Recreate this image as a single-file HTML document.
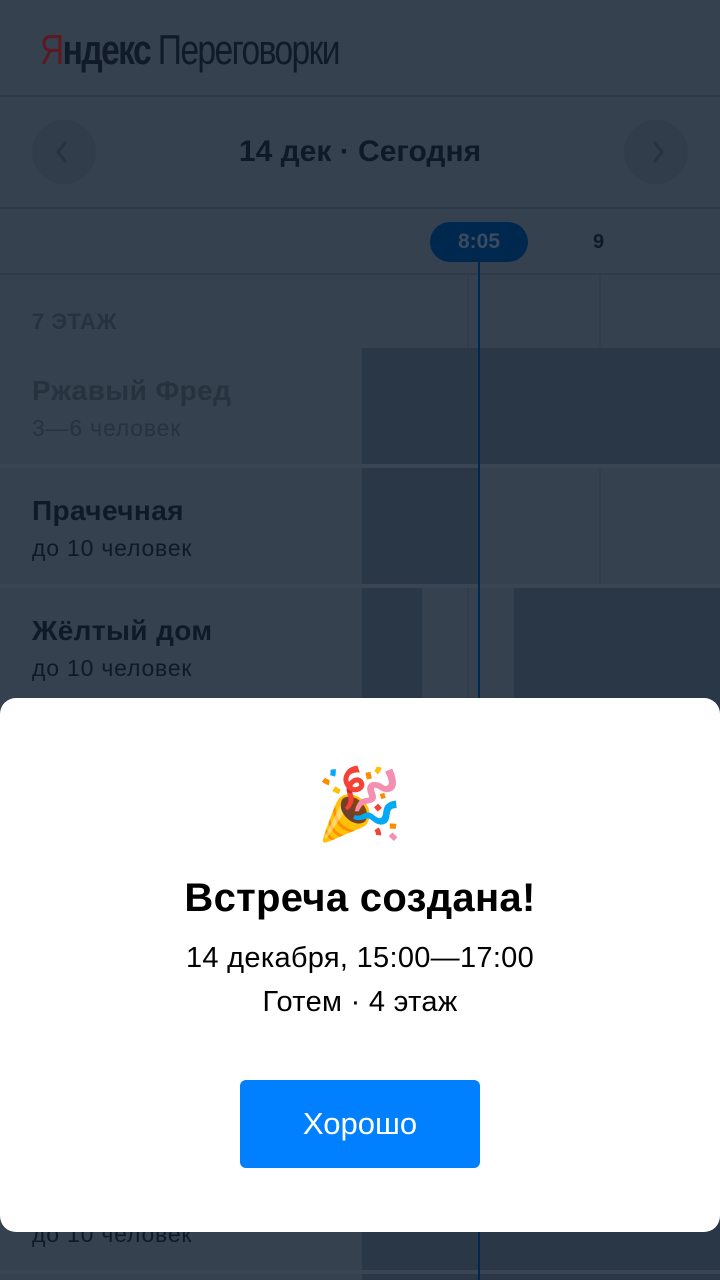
<!DOCTYPE html>
<html><head><meta charset="utf-8"><style>
*{margin:0;padding:0;box-sizing:border-box}
body{width:720px;height:1280px;overflow:hidden;background:#36414f;font-family:"Liberation Sans",Arial,sans-serif;position:relative}
.a{position:absolute}
.hl{position:absolute;left:0;width:720px;height:2px;background:#2f3a48}
.blk{position:absolute;background:#2a3747}
.gap{position:absolute;left:0;width:720px;height:4px;background:#3a4553}
.nm{position:absolute;left:32px;font-size:28px;font-weight:bold;color:#0f1a28;letter-spacing:0.4px}
.sb{position:absolute;left:32px;font-size:23px;color:#0f1a28;letter-spacing:0.8px}
</style></head><body>
<div class="a" style="left:40px;top:26px;font-size:42px;letter-spacing:-2px;transform:scaleX(.8);transform-origin:left;white-space:nowrap;color:#101a28"><span style="color:#5a1a20">Я</span><span style="font-weight:bold">ндекс</span> <span style="color:#101a28">Переговорки</span></div>
<div class="hl" style="top:95px"></div>
<div class="a" style="left:32px;top:120px;width:64px;height:64px;border-radius:50%;background:#323d4b"></div>
<svg class="a" style="left:50px;top:138px" width="26" height="28"><path d="M16 4 L8 14 L16 24" stroke="#27323f" stroke-width="3" fill="none"/></svg>
<div class="a" style="left:624px;top:120px;width:64px;height:64px;border-radius:50%;background:#323d4b"></div>
<svg class="a" style="left:644px;top:138px" width="26" height="28"><path d="M10 4 L18 14 L10 24" stroke="#27323f" stroke-width="3" fill="none"/></svg>
<div class="a" style="left:0;top:135px;width:720px;text-align:center;font-size:30px;font-weight:bold;color:#0f1a28;padding-left:-2px">14 дек · Сегодня</div>
<div class="hl" style="top:207px"></div>
<div class="a" style="left:430px;top:222px;width:98px;height:40px;border-radius:20px;background:#00284f;color:#3b4a5e;font-size:21px;font-weight:bold;text-align:center;line-height:40px">8:05</div>
<div class="a" style="left:593px;top:231px;font-size:20px;font-weight:bold;color:#0f1a28">9</div>
<div class="hl" style="top:273px"></div>
<div class="a" style="left:32px;top:309px;font-size:22px;font-weight:bold;color:#27323f;letter-spacing:0.5px">7 ЭТАЖ</div>
<div class="a" style="left:467px;top:275px;width:2px;height:1005px;background:#323d4b"></div>
<div class="a" style="left:599px;top:275px;width:2px;height:1005px;background:#323d4b"></div>
<div class="blk" style="left:362px;top:348px;width:358px;height:116px"></div>
<div class="gap" style="top:464px"></div>
<div class="blk" style="left:362px;top:468px;width:118px;height:116px"></div>
<div class="gap" style="top:584px"></div>
<div class="blk" style="left:362px;top:588px;width:60px;height:120px"></div>
<div class="blk" style="left:514px;top:588px;width:206px;height:120px"></div>
<div class="blk" style="left:362px;top:1200px;width:358px;height:70px"></div>
<div class="gap" style="top:1270px"></div>
<div class="blk" style="left:362px;top:1274px;width:358px;height:6px"></div>
<div class="nm" style="top:375px;color:#27323f">Ржавый Фред</div>
<div class="sb" style="top:415px;color:#27323f">3—6 человек</div>
<div class="nm" style="top:495px">Прачечная</div>
<div class="sb" style="top:535px">до 10 человек</div>
<div class="nm" style="top:615px">Жёлтый дом</div>
<div class="sb" style="top:655px">до 10 человек</div>
<div class="sb" style="top:1221px">до 10 человек</div>
<div class="a" style="left:478px;top:262px;width:2px;height:1018px;background:#00284f"></div>
<div class="a" style="left:0;top:698px;width:720px;height:534px;background:#fff;border-radius:16px">
<div class="a" style="left:0;top:62px;width:720px;text-align:center;font-size:70px;line-height:90px;font-family:'Noto Color Emoji','DejaVu Sans',sans-serif">🎉</div>
<div class="a" style="left:0;top:178px;width:720px;text-align:center;font-size:40px;font-weight:bold;color:#000;letter-spacing:0.3px">Встреча создана!</div>
<div class="a" style="left:0;top:244px;width:720px;text-align:center;font-size:29px;color:#000;letter-spacing:0.3px">14 декабря, 15:00—17:00</div>
<div class="a" style="left:0;top:288px;width:720px;text-align:center;font-size:29px;color:#000;letter-spacing:0.3px">Готем · 4 этаж</div>
<div class="a" style="left:240px;top:382px;width:240px;height:88px;border-radius:6px;background:#0080ff;color:#fff;font-size:31px;text-align:center;line-height:88px">Хорошо</div>
</div>
</body></html>
